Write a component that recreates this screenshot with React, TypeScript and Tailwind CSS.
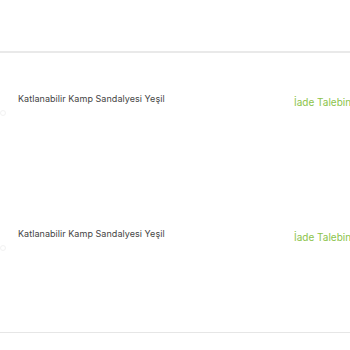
export default function App() {
  const items = ['Katlanabilir Kamp Sandalyesi Yeşil', 'Katlanabilir Kamp Sandalyesi Yeşil'];

  return (
    <main className="h-[350px] w-[350px] overflow-hidden bg-white font-['Inter',sans-serif]">
      <div className="h-[53px] border-b-2 border-[#e9e9e9]" />
      <ul className="border-b border-[#e6e6e6] pb-[9px]">
        {items.map((name, i) => (
          <li key={i} className="relative flex h-[135px] items-start pl-[18px] pt-[40px]">
            <span className="w-[276px] shrink-0 text-[9px] leading-[12px] tracking-[0.05px] text-[#444]">{name}</span>
            <span className="mt-[3px] whitespace-nowrap text-[10px] leading-[12px] text-[#8bc34a]">
              İade Talebini Gör
            </span>
            <span className="absolute left-0 top-[57px] h-[6px] w-[6px] rounded-full border border-[#f2f2f2]" />
          </li>
        ))}
      </ul>
    </main>
  );
}
